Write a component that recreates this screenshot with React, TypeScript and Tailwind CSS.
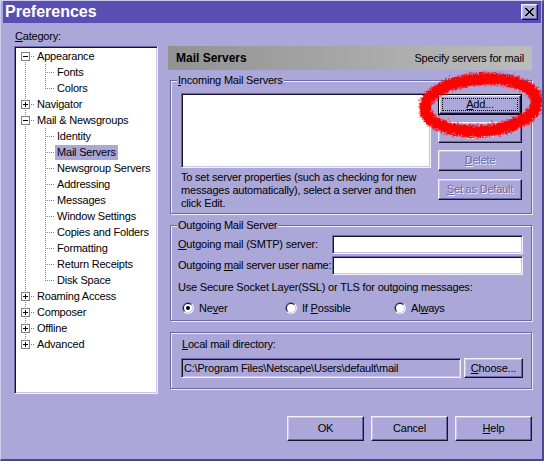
import React from "react";

const RAISED =
  "border border-t-[#f2f1fb] border-l-[#f2f1fb] border-r-[#16142a] border-b-[#16142a] shadow-[inset_-1px_-1px_0_#6c68a8,inset_1px_1px_0_#c9c6ea]";
const SUNKEN =
  "border border-t-[#6c68a8] border-l-[#6c68a8] border-r-[#f2f1fb] border-b-[#f2f1fb] shadow-[inset_1px_1px_0_#16142a,inset_-1px_-1px_0_#c9c6ea]";
const ETCHED =
  "border border-[#6c68a8] shadow-[inset_1px_1px_0_#ecebf8,1px_1px_0_#ecebf8]";

function U({ children }: { children: React.ReactNode }) {
  return <span className="underline decoration-1 underline-offset-[1px]">{children}</span>;
}

function Btn({
  children,
  className = "",
  disabled = false,
  isDefault = false,
}: {
  children: React.ReactNode;
  className?: string;
  disabled?: boolean;
  isDefault?: boolean;
}) {
  const txt = disabled ? "text-[#6c68a8] [text-shadow:1px_1px_0_#f2f1fb]" : "text-black";
  if (isDefault) {
    return (
      <div className={`border border-black flex ${className}`}>
        <div className={`${RAISED} flex-1 flex p-[2px]`}>
          <div className={`flex-1 flex items-center justify-center border border-dotted border-black ${txt}`}>
            {children}
          </div>
        </div>
      </div>
    );
  }
  return (
    <div className={`${RAISED} flex items-center justify-center ${txt} ${className}`}>{children}</div>
  );
}

type Item = {
  label: string;
  level: 0 | 1;
  exp?: "plus" | "minus";
  last?: boolean;
  selected?: boolean;
};

const TREE: Item[] = [
  { label: "Appearance", level: 0, exp: "minus" },
  { label: "Fonts", level: 1 },
  { label: "Colors", level: 1, last: true },
  { label: "Navigator", level: 0, exp: "plus" },
  { label: "Mail & Newsgroups", level: 0, exp: "minus" },
  { label: "Identity", level: 1 },
  { label: "Mail Servers", level: 1, selected: true },
  { label: "Newsgroup Servers", level: 1 },
  { label: "Addressing", level: 1 },
  { label: "Messages", level: 1 },
  { label: "Window Settings", level: 1 },
  { label: "Copies and Folders", level: 1 },
  { label: "Formatting", level: 1 },
  { label: "Return Receipts", level: 1 },
  { label: "Disk Space", level: 1, last: true },
  { label: "Roaming Access", level: 0, exp: "plus" },
  { label: "Composer", level: 0, exp: "plus" },
  { label: "Offline", level: 0, exp: "plus" },
  { label: "Advanced", level: 0, exp: "plus" },
];

function Gutter({ item, first, lastRoot }: { item: Item; first: boolean; lastRoot: boolean }) {
  const w = item.level === 0 ? 19 : 39;
  const dots: React.ReactNode[] = [];
  const v = (x: number, y1: number, y2: number) => {
    for (let y = y1; y <= y2; y += 2) dots.push(<rect key={`v${x}-${y}`} x={x} y={y} width={1} height={1} fill="#808080" />);
  };
  const h = (x1: number, x2: number, y: number) => {
    for (let x = x1; x <= x2; x += 2) dots.push(<rect key={`h${x}-${y}`} x={x} y={y} width={1} height={1} fill="#808080" />);
  };
  if (item.level === 0) {
    if (!first) v(9, 0, 2);
    if (!lastRoot) v(9, 14, 14);
    h(15, 17, 8);
  } else {
    v(9, 0, 14);
    v(29, 0, item.last ? 8 : 14);
    h(31, 37, 8);
  }
  return (
    <svg width={w} height={16} shapeRendering="crispEdges" className="shrink-0">
      {dots}
      {item.level === 0 && (
        <g>
          <rect x={5.5} y={4.5} width={8} height={8} fill="#fff" stroke="#808080" />
          <line x1={7} x2={12} y1={8.5} y2={8.5} stroke="#000" />
          {item.exp === "plus" && <line x1={9.5} x2={9.5} y1={6} y2={11} stroke="#000" />}
        </g>
      )}
    </svg>
  );
}

function Radio({ checked }: { checked?: boolean }) {
  return (
    <svg width={12} height={12} className="shrink-0">
      <circle cx={6} cy={6} r={6} fill="#f2f1fb" />
      <path d="M 1.757 10.243 A 6 6 0 0 1 10.243 1.757 Z" fill="#6c68a8" />
      <circle cx={6} cy={6} r={5} fill="#c9c6ea" />
      <path d="M 2.464 9.536 A 5 5 0 0 1 9.536 2.464 Z" fill="#16142a" />
      <circle cx={6} cy={6} r={4} fill="#fff" />
      {checked && <circle cx={6} cy={6} r={2} fill="#000" />}
    </svg>
  );
}

function GroupLabel({ children }: { children: React.ReactNode }) {
  return (
    <div className="absolute left-[6px] top-[-7px] px-[1px] bg-[#aba7d9] leading-[13px]">{children}</div>
  );
}

export default function App() {
  const lastRootIdx = TREE.length - 1;
  return (
    <div className="relative w-[544px] h-[461px] overflow-hidden bg-[#aba7d9] border-t border-l border-t-[#cfcdee] border-l-[#cfcdee] border-r-2 border-b-2 border-r-[#4b468f] border-b-[#4b468f] font-['Liberation_Sans',Arial,sans-serif] text-[11px] leading-[13px] tracking-[-0.2px] text-black flex flex-col">
      {/* Title bar */}
      <div className="h-[22px] ml-[2px] mr-[1px] bg-[#5a4eb2] flex items-center justify-between pl-[2px] pr-[3px]">
        <div className="text-white font-bold text-[16px] leading-[22px] tracking-normal">Preferences</div>
        <div className={`${RAISED} w-[17px] h-[16px] bg-[#aba7d9] flex items-center justify-center`}>
          <svg width={11} height={10} shapeRendering="crispEdges">
            <path d="M1 1 L9 9 M2 1 L10 9 M9 1 L1 9 M10 1 L2 9" stroke="#000" strokeWidth={1.3} />
          </svg>
        </div>
      </div>

      {/* Body */}
      <div className="flex pl-[13px]">
        {/* Left column */}
        <div className="w-[144px] flex flex-col">
          <div className="h-[23px] pt-[7px] pl-[1px]">
            <U>C</U>ategory:
          </div>
          <div className={`${SUNKEN} bg-white h-[348px] p-[1px] flex flex-col`}>
            {TREE.map((it, i) => (
              <div key={it.label} className="h-[16px] flex items-center whitespace-nowrap">
                <Gutter item={it} first={i === 0} lastRoot={i === lastRootIdx} />
                <span
                  className={`h-[15px] px-[2px] flex items-center ${it.selected ? "bg-[#aba7d9]" : ""}`}
                >
                  {it.label}
                </span>
              </div>
            ))}
          </div>
        </div>

        {/* Right column */}
        <div className="ml-[10px] w-[364px] pt-[23px] flex flex-col">
          <div className="h-[24px] bg-linear-to-r from-[#929292] to-[#bdbdbd] flex items-center justify-between pl-[8px] pr-[8px]">
            <span className="font-bold text-[12px] tracking-normal">Mail Servers</span>
            <span>Specify servers for mail</span>
          </div>

          {/* Incoming */}
          <div className={`relative mt-[10px] ml-[2px] h-[134px] ${ETCHED}`}>
            <GroupLabel>
              <U>I</U>ncoming Mail Servers
            </GroupLabel>
            <div className="flex pl-[10px] pt-[12px]">
              <div className="w-[250px] flex flex-col">
                <div className={`${SUNKEN} bg-white h-[75px]`} />
                <div className="mt-[3px] whitespace-nowrap">
                  To set server properties (such as checking for new
                  <br />
                  messages automatically), select a server and then
                  <br />
                  click Edit.
                </div>
              </div>
              <div className="ml-[7px] w-[84px] flex flex-col gap-[7px] mt-[1px]">
                <Btn isDefault className="h-[21px]">
                  <span>
                    <U>A</U>dd...
                  </span>
                </Btn>
                <Btn disabled className="h-[21px]">
                  <span>
                    <U>E</U>dit...
                  </span>
                </Btn>
                <Btn disabled className="h-[21px]">
                  <span>
                    <U>D</U>elete
                  </span>
                </Btn>
                <Btn disabled className="h-[21px] mt-[1px]">
                  <span>
                    <U>S</U>et as Default
                  </span>
                </Btn>
              </div>
            </div>
          </div>

          {/* Outgoing */}
          <div className={`relative mt-[11px] ml-[2px] h-[96px] ${ETCHED}`}>
            <GroupLabel>Outgoing Mail Server</GroupLabel>
            <div className="flex flex-col pt-[9px] pl-[7px]">
              <div className="flex items-center h-[19px]">
                <div className="w-[154px] whitespace-nowrap">
                  <U>O</U>utgoing mail (SMTP) server:
                </div>
                <div className={`${SUNKEN} bg-white w-[191px] h-[19px]`} />
              </div>
              <div className="flex items-center h-[19px] mt-[2px]">
                <div className="w-[154px] whitespace-nowrap">
                  Outgoing <U>m</U>ail server user name:
                </div>
                <div className={`${SUNKEN} bg-white w-[191px] h-[19px]`} />
              </div>
              <div className="mt-[6px] whitespace-nowrap">
                Use Secure Socket Layer(SSL) or TLS for outgoing messages:
              </div>
              <div className="mt-[6px] h-[16px] flex items-center pl-[4px]">
                <div className="w-[103px] flex items-center gap-[5px]">
                  <Radio checked />
                  <span>
                    Ne<U>v</U>er
                  </span>
                </div>
                <div className="w-[109px] flex items-center gap-[5px]">
                  <Radio />
                  <span>
                    If <U>P</U>ossible
                  </span>
                </div>
                <div className="flex items-center gap-[5px]">
                  <Radio />
                  <span>
                    Al<U>w</U>ays
                  </span>
                </div>
              </div>
            </div>
          </div>

          {/* Local mail directory */}
          <div className={`mt-[11px] ml-[2px] h-[57px] ${ETCHED} flex flex-col pl-[10px] pt-[5px]`}>
            <div className="pl-[1px]">
              <U>L</U>ocal mail directory:
            </div>
            <div className="mt-[7px] flex items-center">
              <div className={`${SUNKEN} w-[280px] h-[20px] flex items-center pl-[2px] whitespace-nowrap`}>
                C:\Program Files\Netscape\Users\default\mail
              </div>
              <Btn className="ml-[3px] w-[59px] h-[20px]">
                <span>
                  <U>C</U>hoose...
                </span>
              </Btn>
            </div>
          </div>
        </div>
      </div>

      {/* Bottom buttons */}
      <div className="mt-[22px] flex justify-end gap-[7px] pr-[10px]">
        <Btn className="w-[77px] h-[25px]">OK</Btn>
        <Btn className="w-[77px] h-[25px]">Cancel</Btn>
        <Btn className="w-[77px] h-[25px]">
          <span>
            <U>H</U>elp
          </span>
        </Btn>
      </div>

      {/* Red annotation ellipse */}
      <svg className="absolute left-[408px] top-[64px] pointer-events-none" width={136} height={84}>
        <defs>
          <filter id="spray" x="-10%" y="-20%" width="120%" height="140%">
            <feTurbulence type="fractalNoise" baseFrequency="1.2" numOctaves={2} seed={3} result="n" />
            <feDisplacementMap in="SourceGraphic" in2="n" scale={9} xChannelSelector="R" yChannelSelector="G" />
          </filter>
        </defs>
        <ellipse
          cx={72}
          cy={40}
          rx={56}
          ry={26}
          fill="none"
          stroke="#ff0000"
          strokeWidth={12}
          transform="rotate(-4 72 40)"
          filter="url(#spray)"
        />
      </svg>
    </div>
  );
}
